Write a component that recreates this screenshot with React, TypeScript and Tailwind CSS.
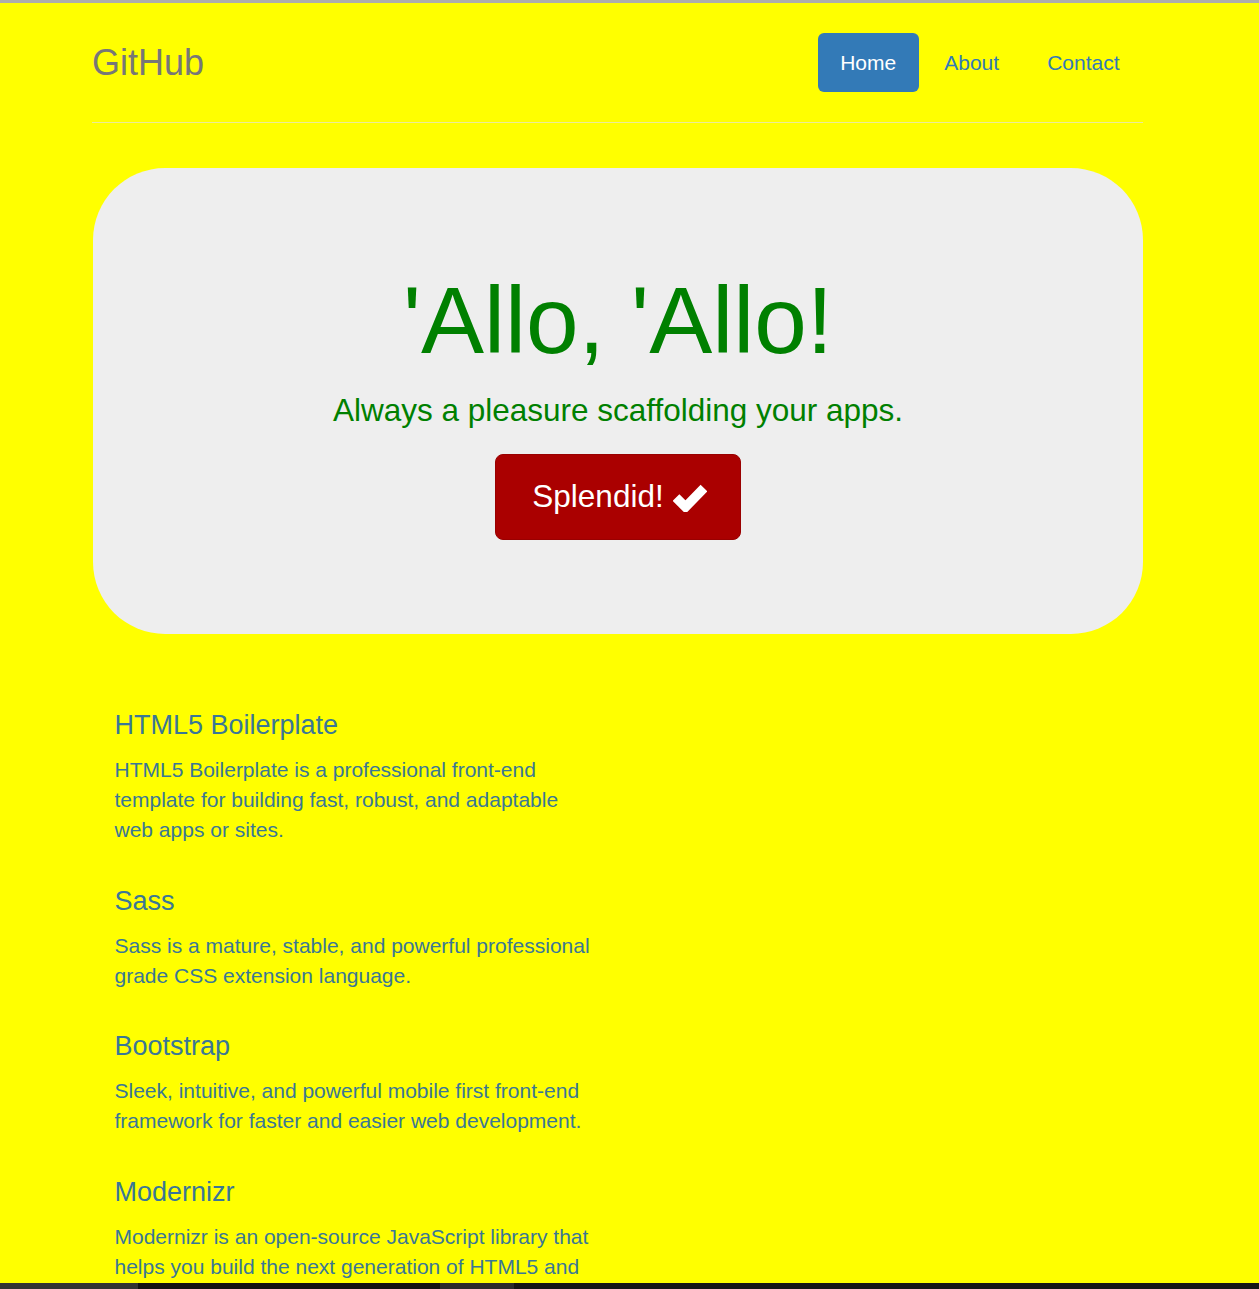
import React from "react";

const features = [
  {
    title: "HTML5 Boilerplate",
    text: "HTML5 Boilerplate is a professional front-end template for building fast, robust, and adaptable web apps or sites.",
  },
  {
    title: "Sass",
    text: "Sass is a mature, stable, and powerful professional grade CSS extension language.",
  },
  {
    title: "Bootstrap",
    text: "Sleek, intuitive, and powerful mobile first front-end framework for faster and easier web development.",
  },
  {
    title: "Modernizr",
    text: "Modernizr is an open-source JavaScript library that helps you build the next generation of HTML5 and CSS3-powered websites.",
  },
];

function CheckIcon() {
  return (
    <svg width="34" height="30" viewBox="0 0 34 30" aria-hidden="true">
      <path
        d="M3 15.5 L12.5 25 L31 6"
        fill="none"
        stroke="#fff"
        strokeWidth="9.5"
        strokeLinecap="butt"
        strokeLinejoin="miter"
      />
    </svg>
  );
}

export default function App() {
  return (
    <div className="flex h-[1289px] flex-col overflow-hidden bg-[#ffff00] font-['Liberation_Sans',Arial,sans-serif]">
      <div className="h-[3px] shrink-0 bg-[#adadad]" />

      <div className="min-h-0 flex-1 overflow-hidden">
        <div className="ml-[92px] w-[1051px]">
          {/* header */}
          <div className="flex items-center justify-between border-b border-[#ebeb9a] pt-[30px] pb-[30px]">
            <h3 className="text-[36px] leading-[59px] text-[#777777]">GitHub</h3>
            <ul className="mr-[1px] flex gap-[3px] text-[21px] leading-[29px]">
              <li>
                <a className="block rounded-[6px] bg-[#337ab7] px-[22.5px] py-[15px] text-white" href="#">
                  Home
                </a>
              </li>
              <li>
                <a className="block px-[22.5px] py-[15px] text-[#337ab7]" href="#">
                  About
                </a>
              </li>
              <li>
                <a className="block px-[22.5px] py-[15px] text-[#337ab7]" href="#">
                  Contact
                </a>
              </li>
            </ul>
          </div>

          {/* jumbotron */}
          <div className="mt-[45px] ml-[1px] w-[1050px] rounded-[72px] bg-[#eeeeee] pt-[100px] pb-[94px] text-center">
            <h1 className="mb-[16px] text-[94.5px] leading-[104px] text-[#008000]">'Allo, 'Allo!</h1>
            <p className="text-[31.5px] leading-[44px] text-[#008000]">
              Always a pleasure scaffolding your apps.
            </p>
            <button className="mt-[22px] inline-flex h-[86px] items-center gap-[9px] rounded-[8px] border border-[#990000] bg-[#aa0000] pr-[33px] pl-[36px] text-[31.5px] text-white">
              Splendid!
              <CheckIcon />
            </button>
          </div>

          {/* marketing */}
          <div className="mt-[76px] flex w-[525px] flex-col gap-[40.5px] px-[22.5px] text-[#3a7796]">
            {features.map((f) => (
              <div key={f.title}>
                <h4 className="mb-[15px] text-[27px] leading-[30px]">{f.title}</h4>
                <p className="text-[21px] leading-[30px]">{f.text}</p>
              </div>
            ))}
          </div>
        </div>
      </div>

      <div className="flex h-[6px] shrink-0">
        <div className="w-[138px] bg-[#333333]" />
        <div className="w-[302px] bg-[#121212]" />
        <div className="w-[74px] bg-[#2c2c2c]" />
        <div className="flex-1 bg-[#161616]" />
      </div>
    </div>
  );
}
